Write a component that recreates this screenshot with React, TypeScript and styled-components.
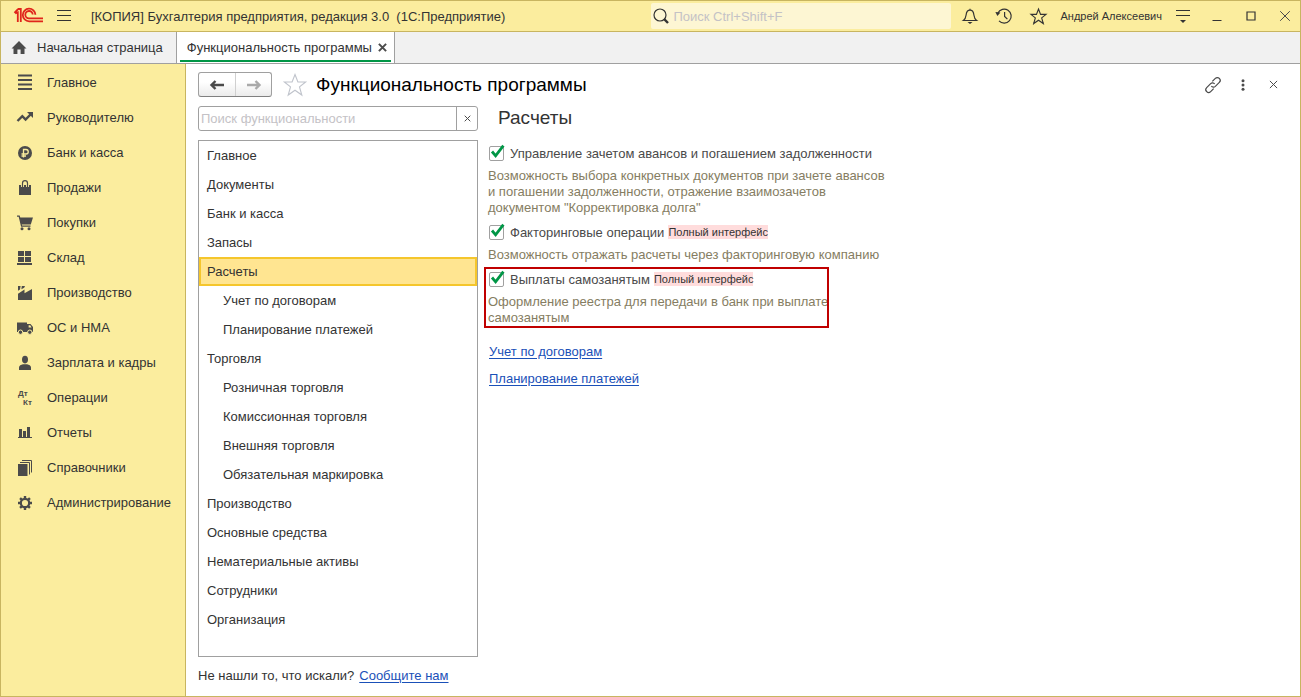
import React, { useState } from "react";
import styled, { createGlobalStyle } from "styled-components";

const GlobalStyle = createGlobalStyle`
  *, *::before, *::after { box-sizing: border-box; }
  html, body { margin: 0; padding: 0; }
  body, button, input { font-family: "Liberation Sans", Arial, sans-serif; font-size: 13px; color: #333; }
  button { background: none; border: 0; padding: 0; cursor: pointer; }
  svg { display: block; flex: none; overflow: visible; }
`;

const Frame = styled.div`
  min-height: 100vh;
  display: flex;
  flex-direction: column;
  border: 1px solid #c8b560;
  background: #fff;
`;

const TitleBar = styled.header`
  display: flex;
  align-items: center;
  gap: 4px;
  height: 31px;
  padding-left: 13px;
  background: #fbed9e;
  border-bottom: 1px solid #c8b560;
`;

const AppTitle = styled.div`
  flex: 1;
  padding-left: 8px;
  white-space: nowrap;
  overflow: hidden;
`;

const GlobalSearch = styled.label`
  display: flex;
  align-items: center;
  gap: 4px;
  flex: 0 1 300px;
  height: 26px;
  padding-left: 2px;
  background: #fdf6d3;
  border-radius: 2px;
`;

const PlainInput = styled.input`
  flex: 1;
  min-width: 0;
  height: 100%;
  padding: 0;
  border: 0;
  outline: 0;
  background: transparent;
  &::placeholder { color: #c4c2c6; opacity: 1; }
`;

const IconButton = styled.button`
  display: flex;
  align-items: center;
  justify-content: center;
  width: 30px;
  height: 30px;
`;

const UserButton = styled.button`
  padding: 0 2px 0 3px;
  font-size: 11px;
  white-space: nowrap;
`;

const TabBar = styled.nav`
  display: flex;
  height: 32px;
  background: #f1f1f1;
  border-bottom: 1px solid #a0a0a0;
`;

const HomeTab = styled.button`
  display: flex;
  align-items: center;
  gap: 10px;
  padding: 0 13px 0 10px;
`;

const ActiveTab = styled.div`
  display: flex;
  align-items: center;
  margin-bottom: -1px;
  padding: 0 3px;
  background: #fff;
  border: solid #a0a0a0;
  border-width: 0 1px 1px;
`;

const TabInner = styled.div`
  display: flex;
  align-items: center;
  gap: 6px;
  height: 29px;
  padding: 2px 4px 0 7px;
  border-bottom: 2px solid #009646;
`;

const Body = styled.div`
  flex: 1;
  display: flex;
`;

const Sidebar = styled.nav`
  flex: 0 0 185px;
  padding-top: 1px;
  background: #fbed9e;
  border-right: 1px solid #c8b560;
`;

const SideLink = styled.button`
  display: flex;
  align-items: center;
  gap: 14px;
  width: 100%;
  height: 35px;
  padding-left: 16px;
  text-align: left;
`;

const Page = styled.main`
  flex: 1;
  min-width: 0;
  display: flex;
  flex-direction: column;
  padding: 8px 12px 12px;
`;

const PageHead = styled.div`
  display: flex;
  align-items: center;
  height: 25px;
  margin-bottom: 9px;
`;

const NavButtons = styled.div`
  display: flex;
  height: 25px;
  border: 1px solid #a0a0a0;
  border-bottom-color: #808080;
  border-radius: 3px;
  background: linear-gradient(#fff 40%, #ebebeb);
`;

const NavButton = styled.button`
  display: flex;
  align-items: center;
  justify-content: center;
  width: 36px;
  & + & { border-left: 1px solid #d0d0d0; }
`;

const StarButton = styled.button`
  margin: 0 9px 0 11px;
`;

const PageTitle = styled.h1`
  flex: 1;
  margin: 0;
  font-size: 19px;
  line-height: 24px;
  font-weight: 400;
  color: #000;
`;

const Columns = styled.div`
  flex: 1;
  display: flex;
  gap: 10px;
`;

const ListColumn = styled.div`
  flex: 0 0 280px;
  display: flex;
  flex-direction: column;
`;

const SearchBox = styled.div`
  display: flex;
  height: 25px;
  padding-left: 2px;
  border: 1px solid #a0a0a0;
  border-radius: 3px;
`;

const ClearButton = styled.button`
  display: flex;
  align-items: center;
  justify-content: center;
  width: 21px;
  border-left: 1px solid #a0a0a0;
`;

const SectionList = styled.div`
  flex: 1;
  margin: 9px 0 11px;
  border: 1px solid #a0a0a0;
`;

const SectionRow = styled.button<{ $nested?: boolean; $selected?: boolean }>`
  display: block;
  width: 100%;
  height: 29px;
  padding-left: ${(p) => (p.$nested ? 24 : 8)}px;
  text-align: left;
  background: ${(p) => (p.$selected ? "#ffe591" : "transparent")};
  box-shadow: ${(p) => (p.$selected ? "inset 0 0 0 2px #f5c62c" : "none")};
`;

const Link = styled.a`
  color: #1a50b8;
  text-decoration: underline;
  text-underline-offset: 2px;
`;

const Footer = styled.div`
  display: flex;
  gap: 5px;
  line-height: 16px;
  white-space: nowrap;
`;

const Options = styled.section`
  flex: 1;
  min-width: 0;
`;

const OptionsTitle = styled.h2`
  margin: 0 0 13px 10px;
  font-size: 19px;
  line-height: 24px;
  font-weight: 400;
`;

const Option = styled.div<{ $marked?: boolean }>`
  position: relative;
  max-width: ${(p) => (p.$marked ? 341 : 400)}px;
  margin-bottom: 6px;
  &::after {
    content: "";
    display: ${(p) => (p.$marked ? "block" : "none")};
    position: absolute;
    inset: -2px 0 -2px -4px;
    border: 2px solid #c00000;
    pointer-events: none;
  }
`;

const OptionLabel = styled.label`
  display: flex;
  align-items: center;
  height: 20px;
  color: #4a4a4a;
  white-space: nowrap;
`;

const TickBox = styled.span`
  display: grid;
  margin: 0 6px 0 1px;
  & > * { grid-area: 1 / 1; }
  & > svg { pointer-events: none; visibility: hidden; }
  & > input:checked + svg { visibility: visible; }
`;

const TickInput = styled.input`
  appearance: none;
  width: 15px;
  height: 15px;
  margin: 0;
  border: 1px solid #a0a0a0;
  border-radius: 2px;
  background: #fff;
`;

const Badge = styled.span`
  margin-left: 4px;
  font-size: 11px;
  line-height: 14px;
  color: #333;
  background: #ffdcdc;
`;

const Description = styled.p`
  margin: 5px 0 0;
  line-height: 16px;
  color: #857d62;
`;

const Links = styled.div`
  display: flex;
  flex-direction: column;
  align-items: flex-start;
  gap: 11px;
  margin: 18px 0 0 1px;
  line-height: 16px;
`;

const ink = "#4b4b4b";

const Logo = () => (
  <svg width="31" height="16" viewBox="0 0 31 16" fill="none" stroke="#e0251b" strokeWidth="1.8">
    <path d="M0.4 4.8 4.2 1M3.8 14V4.4L1.2 5.4M4 1H6.8V14" />
    <path d="M21.4 6.8A6.3 6.3 0 1 0 15.1 13.3H29" />
    <path d="M18.7 6.6A3.7 3.7 0 1 0 15.1 10.4H29" />
  </svg>
);

const Cross = ({ size, weight }: { size: number; weight: number }) => (
  <svg width={size} height={size} viewBox="0 0 10 10" fill="none" stroke={ink} strokeWidth={(weight * 10) / size}>
    <path d="M1 1 9 9M9 1 1 9" />
  </svg>
);

const Magnifier = () => (
  <svg width="16" height="16" viewBox="0 0 16 16" fill="none" stroke="#333">
    <circle cx="7" cy="7" r="6" strokeWidth="1.2" />
    <path d="M11.2 11.2 15 15" strokeWidth="2.4" />
  </svg>
);

const Bell = () => (
  <svg width="16" height="16" viewBox="0 0 16 16" fill="none" stroke="#333" strokeWidth="1.2">
    <path d="M8 0.8V2M1.4 12.5H14.6C12.6 11 12.2 9.6 11.9 7 11.6 4 10.4 2.2 8 2.2S4.4 4 4.1 7C3.8 9.6 3.4 11 1.4 12.5Z" />
    <path d="M5.5 14H10.5L8 16Z" fill="#333" stroke="none" />
  </svg>
);

const History = () => (
  <svg width="16" height="16" viewBox="0 0 16 16" fill="none" stroke="#333" strokeWidth="1.2">
    <path d="M1.9 5A7 7 0 1 1 3 12.8M8.6 4V8.4L11.4 11.2" />
    <path d="M-0.6 4 4.4 4.4 1.4 8Z" fill="#333" stroke="none" />
  </svg>
);

const Star = ({ size, color }: { size: number; color: string }) => (
  <svg width={size} height={size} viewBox="0 0 24 24" fill="none" stroke={color} strokeWidth={27 / size}>
    <path d="M12 1.5 14.9 9H22.6L16.5 13.9 18.8 22 12 17.2 5.2 22 7.5 13.9 1.4 9H9.1Z" />
  </svg>
);

const ServiceMenu = () => (
  <svg width="16" height="14" viewBox="0 0 16 14">
    <path d="M1 1.5H15M1 6.5H15" stroke="#333" />
    <path d="M5 11H11L8 14Z" fill="#333" />
  </svg>
);

const Arrow = ({ color, flip }: { color: string; flip?: boolean }) => (
  <svg width="14" height="10" viewBox="0 0 14 10" fill="none" stroke={color} strokeWidth="2.4">
    <path d={flip ? "M0 5H12M8.5 1 12.5 5 8.5 9" : "M14 5H2M5.5 1 1.5 5 5.5 9"} />
  </svg>
);

const Chain = () => (
  <svg width="16" height="16" viewBox="0 0 24 24" fill="none" stroke={ink} strokeWidth="1.8">
    <path d="M9.5 13.5a4 4 0 0 0 6 .6l6-6a4 4 0 0 0-6-6l-4.5 4.5" />
    <path d="M14.5 10.5a4 4 0 0 0-6-.6l-6 6a4 4 0 0 0 6 6l4.5-4.5" />
  </svg>
);

const sideIcons: Record<string, React.ReactNode> = {
  "Главное": <path d="M2 1.5H16M2 6H16M2 10.5H16M2 15H16" transform="translate(0 -1)" stroke={ink} strokeWidth="2" />,
  "Руководителю": (
    <>
      <path d="M1.5 11 6.3 6.2 9.6 9.6 14.5 4.5" fill="none" stroke={ink} strokeWidth="2.4" />
      <path d="M11 2H17V8Z" />
    </>
  ),
  "Банк и касса": (
    <>
      <circle cx="9" cy="8" r="7" />
      <path d="M7.5 12.5V4.5H10A2.2 2.2 0 0 1 10 9H5.5M5.5 11H10" fill="none" stroke="#fbed9e" strokeWidth="1.3" />
    </>
  ),
  "Продажи": (
    <>
      <path d="M3 5H15V15H3Z" />
      <path d="M6.5 7V3.2A2.5 2.5 0 0 1 11.5 3.2V7" fill="none" stroke="#fbed9e" strokeWidth="3" />
      <path d="M6.5 7V3.2A2.5 2.5 0 0 1 11.5 3.2V7" fill="none" stroke={ink} strokeWidth="1.2" />
    </>
  ),
  "Покупки": (
    <>
      <path d="M1 1.2H3.2L5.6 11.2H14.5" fill="none" stroke={ink} strokeWidth="1.3" />
      <path d="M3.6 2.4H17L14.8 9.6H5.3Z" />
      <circle cx="6" cy="13.8" r="1.5" />
      <circle cx="13" cy="13.8" r="1.5" />
    </>
  ),
  "Склад": <path d="M2 1H8V6H2ZM9 1H15V6H9ZM2 7H8V12H2ZM9 7H15V12H9ZM1 13H16V15H1Z" />,
  "Производство": (
    <path d="M2 1H4.6L4 4.6 2 5.8ZM5.8 1H9L8.2 2.8 5.4 4.2ZM2 15V8.8L8.5 4.4V8.2L16 4V15Z" />
  ),
  "ОС и НМА": (
    <>
      <path d="M1 2.5H11V12H1ZM11 4H14.5L17 7V12H11Z" />
      <path d="M12.6 5.2H14.2L15.6 7.6H12.6Z" fill="#fbed9e" />
      <circle cx="4.5" cy="12.2" r="2.2" stroke="#fbed9e" />
      <circle cx="13.8" cy="12.2" r="2.2" stroke="#fbed9e" />
    </>
  ),
  "Зарплата и кадры": (
    <>
      <ellipse cx="9" cy="4.6" rx="3" ry="3.8" />
      <path d="M3 15V12.5C3 10.4 5 9.8 7 9.2H11C13 9.8 15 10.4 15 12.5V15Z" />
    </>
  ),
  "Операции": (
    <g fontFamily="Liberation Sans, Arial, sans-serif" fontWeight="700" fontSize="8">
      <text x="2" y="6">Дт</text>
      <text x="7" y="15">Кт</text>
    </g>
  ),
  "Отчеты": <path d="M3 4H6V12H3ZM7 6H10V12H7ZM11 2H14V12H11ZM2 12H16V13H2Z" />,
  "Справочники": (
    <>
      <path d="M2 4H11.5V16H2Z" />
      <path d="M4 2.5H13.5V14.5M6 0.5H15.5V12.5" fill="none" stroke={ink} />
    </>
  ),
  "Администрирование": (
    <g fill="none" stroke={ink}>
      <circle cx="9" cy="8" r="4.2" strokeWidth="2.2" />
      <path
        d="M9 1V4M9 12V15M2 8H5M13 8H16M4.05 3.05 6.2 5.2M11.8 10.8 13.95 12.95M4.05 12.95 6.2 10.8M11.8 5.2 13.95 3.05"
        strokeWidth="2.4"
      />
    </g>
  ),
};

const sections = [
  { name: "Главное" },
  { name: "Документы" },
  { name: "Банк и касса" },
  { name: "Запасы" },
  { name: "Расчеты" },
  { name: "Учет по договорам", nested: true },
  { name: "Планирование платежей", nested: true },
  { name: "Торговля" },
  { name: "Розничная торговля", nested: true },
  { name: "Комиссионная торговля", nested: true },
  { name: "Внешняя торговля", nested: true },
  { name: "Обязательная маркировка", nested: true },
  { name: "Производство" },
  { name: "Основные средства" },
  { name: "Нематериальные активы" },
  { name: "Сотрудники" },
  { name: "Организация" },
];

const options = [
  {
    name: "Управление зачетом авансов и погашением задолженности",
    text: 'Возможность выбора конкретных документов при зачете авансов и погашении задолженности, отражение взаимозачетов документом "Корректировка долга"',
  },
  {
    name: "Факторинговые операции",
    badge: true,
    text: "Возможность отражать расчеты через факторинговую компанию",
  },
  {
    name: "Выплаты самозанятым",
    badge: true,
    marked: true,
    text: "Оформление реестра для передачи в банк при выплате самозанятым",
  },
];

export default function App() {
  const [selected, setSelected] = useState("Расчеты");
  return (
    <Frame>
      <GlobalStyle />
      <TitleBar>
        <Logo />
        <IconButton aria-label="Меню">
          <svg width="14" height="12" viewBox="0 0 14 12">
            <path d="M0 0.5H14M0 5.5H14M0 10.5H14" stroke="#333" />
          </svg>
        </IconButton>
        <AppTitle>[КОПИЯ] Бухгалтерия предприятия, редакция 3.0&nbsp; (1С:Предприятие)</AppTitle>
        <GlobalSearch>
          <Magnifier />
          <PlainInput aria-label="Поиск" placeholder="Поиск Ctrl+Shift+F" />
        </GlobalSearch>
        <IconButton aria-label="Уведомления"><Bell /></IconButton>
        <IconButton aria-label="История"><History /></IconButton>
        <IconButton aria-label="Избранное"><Star size={17} color="#333" /></IconButton>
        <UserButton>Андрей Алексеевич</UserButton>
        <IconButton aria-label="Сервис"><ServiceMenu /></IconButton>
        <IconButton aria-label="Свернуть">
          <svg width="10" height="10" viewBox="0 0 10 10"><path d="M0.5 9.5H9.5" stroke="#333" /></svg>
        </IconButton>
        <IconButton aria-label="Развернуть">
          <svg width="10" height="10" viewBox="0 0 10 10"><path d="M1 1H9V9H1Z" fill="none" stroke="#333" strokeWidth="1.2" /></svg>
        </IconButton>
        <IconButton aria-label="Закрыть окно"><Cross size={12} weight={1} /></IconButton>
      </TitleBar>

      <TabBar>
        <HomeTab>
          <svg width="16" height="14" viewBox="0 0 16 14" fill={ink}>
            <path d="M8 0 15.5 7.5H13.5V13H9.6V8.5H6.4V13H2.5V7.5H0.5Z" />
          </svg>
          Начальная страница
        </HomeTab>
        <ActiveTab>
          <TabInner>
            Функциональность программы
            <button aria-label="Закрыть вкладку"><Cross size={9} weight={2} /></button>
          </TabInner>
        </ActiveTab>
      </TabBar>

      <Body>
        <Sidebar>
          {Object.entries(sideIcons).map(([name, icon]) => (
            <SideLink key={name}>
              <svg width="16" height="16" viewBox="1 0 16 16" fill={ink}>{icon}</svg>
              {name}
            </SideLink>
          ))}
        </Sidebar>

        <Page>
          <PageHead>
            <NavButtons>
              <NavButton aria-label="Назад"><Arrow color={ink} /></NavButton>
              <NavButton aria-label="Вперед"><Arrow color="#aaa" flip /></NavButton>
            </NavButtons>
            <StarButton aria-label="В избранное"><Star size={24} color="#c0c4cc" /></StarButton>
            <PageTitle>Функциональность программы</PageTitle>
            <IconButton aria-label="Ссылка"><Chain /></IconButton>
            <IconButton aria-label="Еще">
              <svg width="4" height="12" viewBox="0 0 4 12" fill={ink}>
                <circle cx="2" cy="1.8" r="1.5" />
                <circle cx="2" cy="6" r="1.5" />
                <circle cx="2" cy="10.2" r="1.5" />
              </svg>
            </IconButton>
            <IconButton aria-label="Закрыть"><Cross size={9} weight={1} /></IconButton>
          </PageHead>

          <Columns>
            <ListColumn>
              <SearchBox>
                <PlainInput aria-label="Поиск функциональности" placeholder="Поиск функциональности" />
                <ClearButton aria-label="Очистить"><Cross size={7} weight={1} /></ClearButton>
              </SearchBox>
              <SectionList>
                {sections.map((s) => (
                  <SectionRow
                    key={s.name}
                    $nested={s.nested}
                    $selected={s.name === selected}
                    onClick={() => setSelected(s.name)}
                  >
                    {s.name}
                  </SectionRow>
                ))}
              </SectionList>
              <Footer>
                Не нашли то, что искали?
                <Link href="#report">Сообщите нам</Link>
              </Footer>
            </ListColumn>

            <Options>
              <OptionsTitle>Расчеты</OptionsTitle>
              {options.map((o) => (
                <Option key={o.name} $marked={o.marked}>
                  <OptionLabel>
                    <TickBox>
                      <TickInput type="checkbox" defaultChecked />
                      <svg width="15" height="15" viewBox="0 0 15 15" fill="none" stroke="#009646" strokeWidth="2.8">
                        <path d="M3 5.5 6.6 9.8 14.4 -0.4" />
                      </svg>
                    </TickBox>
                    {o.name}
                    {o.badge && <Badge>Полный интерфейс</Badge>}
                  </OptionLabel>
                  <Description>{o.text}</Description>
                </Option>
              ))}
              <Links>
                <Link href="#contracts">Учет по договорам</Link>
                <Link href="#payments">Планирование платежей</Link>
              </Links>
            </Options>
          </Columns>
        </Page>
      </Body>
    </Frame>
  );
}
